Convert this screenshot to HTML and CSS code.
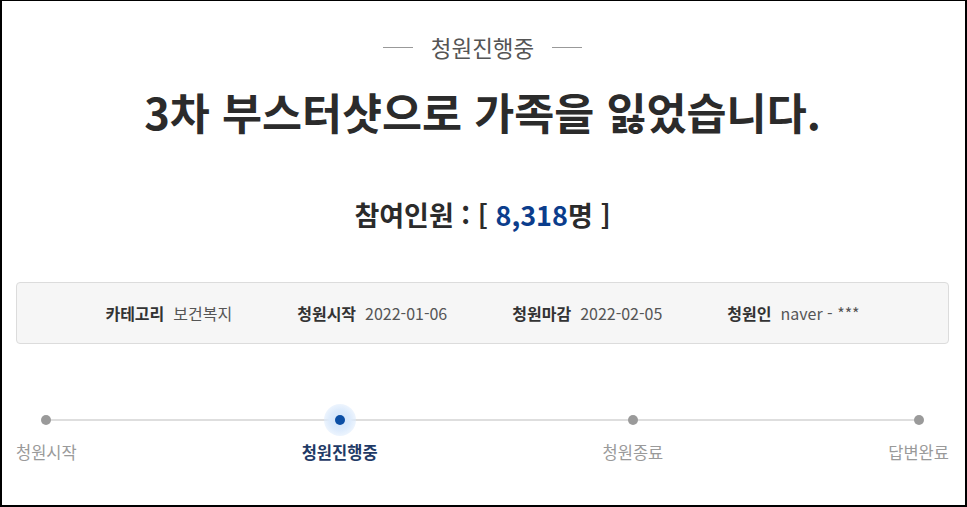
FILE: index.html
```html
<!DOCTYPE html>
<html lang="ko">
<head>
<meta charset="utf-8">
<link rel="stylesheet" href="styles.css">
</head>
<body>
<div class="frame">
  <div class="status"><span class="dash"></span><span class="status-text">청원진행중</span><span class="dash"></span></div>
  <h1 class="title">3차 부스터샷으로 가족을 잃었습니다.</h1>
  <div class="count">참여인원 : [ <span class="num">8,318</span>명 ]</div>
  <div class="info">
    <div class="item"><span class="label">카테고리</span><span class="value">보건복지</span></div>
    <div class="item"><span class="label">청원시작</span><span class="value">2022-01-06</span></div>
    <div class="item"><span class="label">청원마감</span><span class="value">2022-02-05</span></div>
    <div class="item"><span class="label">청원인</span><span class="value">naver - ***</span></div>
  </div>
  <div class="steps">
    <div class="step"><span class="dot"></span><span class="step-label">청원시작</span></div>
    <div class="step active"><span class="dot"></span><span class="step-label">청원진행중</span></div>
    <div class="step"><span class="dot"></span><span class="step-label">청원종료</span></div>
    <div class="step"><span class="dot"></span><span class="step-label">답변완료</span></div>
  </div>
</div>
</body>
</html>
```
FILE: styles.css
```css
html, body {
  margin: 0;
  padding: 0;
  background: #fff;
}
.frame {
  box-sizing: border-box;
  width: 967px;
  height: 507px;
  border: 2px solid #000;
  border-top-width: 1px;
  font-family: "Noto Sans CJK KR", "Noto Sans", sans-serif;
  color: #333;
  padding: 0 16px 0 14px;
  overflow: hidden;
}
.status {
  display: flex;
  justify-content: center;
  align-items: center;
  gap: 18px;
  margin-top: 32px;
  height: 28px;
}
.dash {
  width: 30px;
  height: 1px;
  background: #999;
}
.status-text {
  font-size: 22.5px;
  color: #555;
  line-height: 28px;
}
.title {
  margin: 23px 0 0;
  text-align: center;
  font-size: 43.5px;
  font-weight: 700;
  line-height: 56px;
  color: #2b2b2b;
}
.count {
  margin-top: 57px;
  text-align: center;
  font-size: 27px;
  font-weight: 700;
  line-height: 36px;
  color: #2b2b2b;
}
.num {
  color: #0b3d8c;
}
.info {
  margin-top: 49px;
  height: 62px;
  box-sizing: border-box;
  border: 1px solid #dcdcdc;
  border-radius: 4px;
  background: #f6f6f6;
  display: flex;
  justify-content: center;
  align-items: center;
  gap: 65px;
}
.item {
  display: flex;
  gap: 9px;
  font-size: 16px;
  line-height: 24px;
}
.label {
  font-weight: 700;
  color: #333;
}
.value {
  color: #555;
}
.steps {
  position: relative;
  margin-top: 60px;
  display: flex;
  justify-content: space-between;
}
.steps::before {
  content: "";
  position: absolute;
  left: 30px;
  right: 30px;
  top: 15px;
  height: 2px;
  background: #dedede;
}
.step {
  position: relative;
  display: flex;
  flex-direction: column;
  align-items: center;
}
.dot {
  width: 32px;
  height: 32px;
  display: flex;
  align-items: center;
  justify-content: center;
  border-radius: 50%;
}
.dot::after {
  content: "";
  width: 10px;
  height: 10px;
  border-radius: 50%;
  background: #9a9a9a;
}
.active .dot {
  background: radial-gradient(circle, #cfe3fb 0%, #ddebfc 45%, rgba(240,247,255,0) 100%);
}
.active .dot::after {
  background: #0c4fa5;
}
.step-label {
  margin-top: 4px;
  font-size: 16.5px;
  line-height: 24px;
  color: #9a9a9a;
}
.active .step-label {
  font-weight: 700;
  color: #1f3a66;
}
```
